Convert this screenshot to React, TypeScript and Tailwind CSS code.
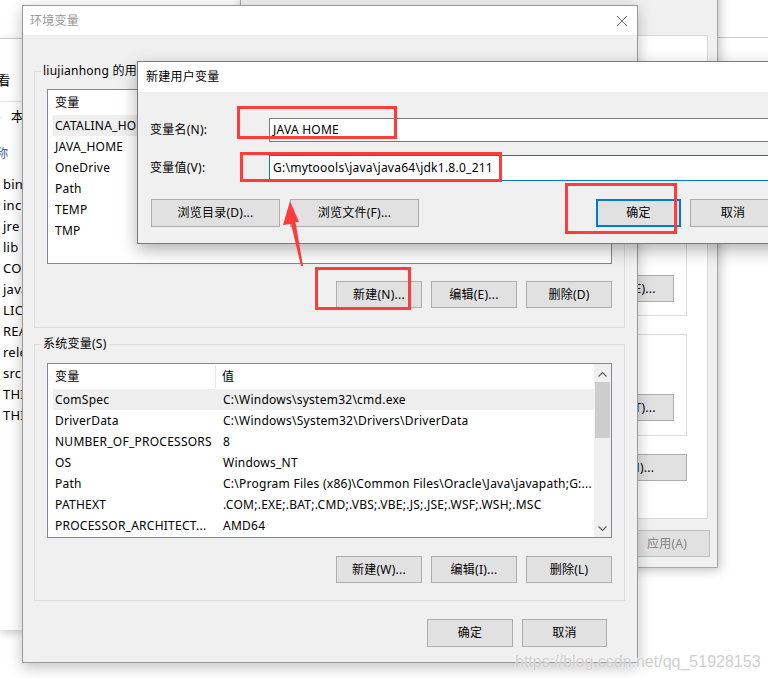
import type { ReactNode } from 'react';

const userVars = ['CATALINA_HOME', 'JAVA_HOME', 'OneDrive', 'Path', 'TEMP', 'TMP'];

const sysVars: [string, string][] = [
  ['ComSpec', 'C:\\Windows\\system32\\cmd.exe'],
  ['DriverData', 'C:\\Windows\\System32\\Drivers\\DriverData'],
  ['NUMBER_OF_PROCESSORS', '8'],
  ['OS', 'Windows_NT'],
  ['Path', 'C:\\Program Files (x86)\\Common Files\\Oracle\\Java\\javapath;G:...'],
  ['PATHEXT', '.COM;.EXE;.BAT;.CMD;.VBS;.VBE;.JS;.JSE;.WSF;.WSH;.MSC'],
  ['PROCESSOR_ARCHITECT...', 'AMD64'],
];

const files = [
  'bin',
  'include',
  'jre',
  'lib',
  'COPYRIGHT',
  'javafx-src.zip',
  'LICENSE',
  'README.html',
  'release',
  'src.zip',
  'THIRDPARTYLICENSEREADME.txt',
  'THIRDPARTYLICENSEREADME-JAVAFX.txt',
];

function Button({ children, className = '' }: { children: ReactNode; className?: string }) {
  return (
    <div className={`flex shrink-0 items-center justify-center whitespace-nowrap bg-[#e1e1e1] text-[12px] ${className}`}>
      {children}
    </div>
  );
}

function GroupBox({ label, className = '', children }: { label: string; className?: string; children: ReactNode }) {
  return (
    <div className={`relative border border-[#dcdcdc] ${className}`}>
      <span className="absolute -top-[9px] left-[6px] whitespace-nowrap bg-[#f0f0f0] px-[2px] leading-[16px]">{label}</span>
      {children}
    </div>
  );
}

function Chevron({ down = false }: { down?: boolean }) {
  return (
    <svg width="9" height="5" viewBox="0 0 9 5">
      <polyline
        points={down ? '0.5,0.5 4.5,4.5 8.5,0.5' : '0.5,4.5 4.5,0.5 8.5,4.5'}
        fill="none"
        stroke="#606060"
        strokeWidth="1.2"
      />
    </svg>
  );
}

function RedBox({ className }: { className: string }) {
  return <div className={`absolute z-50 border-[3px] border-[#ff3b3b] ${className}`} />;
}

export default function App() {
  return (
    <div className="relative h-[678px] w-[768px] overflow-hidden bg-white text-[12px] tracking-[0.25px] text-black [font-family:'Noto_Sans','Noto_Sans_CJK_SC',sans-serif]">
      {/* far right window */}
      <div className="absolute left-[718px] top-0 z-0 h-[678px] w-[60px] bg-white">
        <div className="h-[38px] border-b border-[#cfcfcf]" />
      </div>

      {/* system properties window (behind) */}
      <div className="absolute left-[240px] top-[-30px] z-10 flex h-[598px] w-[478px] flex-col items-end border border-[#a8a8a8] bg-[#f0f0f0] pr-[9px] shadow-[2px_2px_10px_rgba(0,0,0,0.25)]">
        <div className="mt-[64px] flex h-[484px] w-[420px] flex-col items-end border border-[#d9d9d9] bg-white pr-[20px]">
          <div className="mt-[114px] flex h-[166px] w-[380px] flex-col items-end justify-end border border-[#dcdcdc] pb-[13px] pr-[12px]">
            <Button className="h-[27px] w-[86px] border border-[#adadad]">设置(E)...</Button>
          </div>
          <div className="mt-[18px] flex h-[102px] w-[380px] flex-col items-end justify-end border border-[#dcdcdc] pb-[14px] pr-[12px]">
            <Button className="h-[27px] w-[86px] border border-[#adadad]">设置(T)...</Button>
          </div>
          <Button className="mt-[18px] h-[27px] w-[142px] border border-[#adadad]">环境变量(N)...</Button>
        </div>
        <Button className="-mr-[2px] mt-[11px] h-[27px] w-[86px] border border-[#bfbfbf] bg-[#cccccc] text-[#838383]">
          应用(A)
        </Button>
      </div>

      {/* explorer window at left */}
      <div className="absolute left-0 top-[38px] z-20 h-[592px] w-[24px] overflow-hidden border-t border-[#c9c9c9] bg-white shadow-[0_3px_8px_rgba(0,0,0,0.2)]">
        <div className="mt-[31px] h-[21px] whitespace-nowrap leading-[21px] -ml-[16px] text-[13px]">查看</div>
        <div className="mt-[10px] border-t border-[#e3e3e3]" />
        <div className="mt-[4px] flex h-[21px] items-center whitespace-nowrap">
          <span className="-ml-[3px] text-[#777]">›</span>
          <span className="ml-[10px] text-[13px]">本</span>
        </div>
        <div className="mt-[16px] h-[21px] whitespace-nowrap leading-[21px] -ml-[16px] text-[#3b5998]">名称</div>
        <div className="mt-[10px]">
          {files.map((f) => (
            <div key={f} className="h-[21px] whitespace-nowrap pl-[3px] leading-[21px] text-[13px]">
              {f}
            </div>
          ))}
        </div>
      </div>

      {/* 环境变量 window */}
      <div className="absolute left-[22px] top-[5px] z-30 flex h-[658px] w-[616px] flex-col border border-[#9a9a9a] bg-[#f0f0f0] shadow-[0_4px_14px_rgba(0,0,0,0.25)]">
        <div className="flex h-[29px] shrink-0 items-center justify-between bg-white pl-[7px] pr-[10px] text-[#999]">
          <span>环境变量</span>
          <svg width="10" height="10" viewBox="0 0 10 10">
            <path d="M0 0L10 10M10 0L0 10" stroke="#7a7a7a" strokeWidth="1" />
          </svg>
        </div>
        <div className="flex flex-1 flex-col pl-[11px] pr-[12px] pt-[36px]">
          <GroupBox label="liujianhong 的用户变量(U)" className="h-[257px]">
            <div className="px-[12px] pt-[17px]">
              <div className="h-[175px] border border-[#828790] bg-white">
                <div className="h-[25px] pl-[7px] leading-[25px]">变量</div>
                {userVars.map((v, i) => (
                  <div
                    key={v}
                    className={`ml-[5px] h-[21px] whitespace-nowrap pl-[2px] leading-[21px] ${i === 0 ? 'bg-[#efefef]' : ''}`}
                  >
                    {v}
                  </div>
                ))}
              </div>
              <div className="mt-[17px] flex justify-end gap-[9px]">
                <Button className="h-[27px] w-[86px] border border-[#adadad]">新建(N)...</Button>
                <Button className="h-[27px] w-[86px] border border-[#adadad]">编辑(E)...</Button>
                <Button className="h-[27px] w-[86px] border border-[#adadad]">删除(D)</Button>
              </div>
            </div>
          </GroupBox>

          <GroupBox label="系统变量(S)" className="mt-[16px] h-[257px]">
            <div className="px-[12px] pt-[18px]">
              <div className="flex h-[175px] border border-[#828790] bg-white">
                <div className="min-w-0 flex-1 overflow-hidden">
                  <div className="flex h-[25px] items-center">
                    <div className="h-[23px] w-[168px] shrink-0 border-r border-[#e5e5e5] pl-[7px] leading-[23px]">变量</div>
                    <div className="pl-[6px]">值</div>
                  </div>
                  {sysVars.map(([name, value], i) => (
                    <div
                      key={name}
                      className={`ml-[5px] flex h-[21px] leading-[21px] ${i === 0 ? 'bg-[#efefef]' : ''}`}
                    >
                      <div className="w-[163px] shrink-0 overflow-hidden whitespace-nowrap pl-[2px]">{name}</div>
                      <div className="overflow-hidden whitespace-nowrap pl-[7px]">{value}</div>
                    </div>
                  ))}
                </div>
                <div className="flex w-[17px] shrink-0 flex-col bg-[#f0f0f0]">
                  <div className="flex h-[17px] items-center justify-center pt-[3px]">
                    <Chevron />
                  </div>
                  <div className="mx-[1px] mt-[1px] h-[56px] bg-[#cdcdcd]" />
                  <div className="flex-1" />
                  <div className="flex h-[17px] items-center justify-center">
                    <Chevron down />
                  </div>
                </div>
              </div>
              <div className="mt-[18px] flex justify-end gap-[9px]">
                <Button className="h-[27px] w-[86px] border border-[#adadad]">新建(W)...</Button>
                <Button className="h-[27px] w-[86px] border border-[#adadad]">编辑(I)...</Button>
                <Button className="h-[27px] w-[86px] border border-[#adadad]">删除(L)</Button>
              </div>
            </div>
          </GroupBox>

          <div className="mr-[18px] mt-[18px] flex justify-end gap-[9px]">
            <Button className="h-[28px] w-[86px] border border-[#adadad]">确定</Button>
            <Button className="h-[28px] w-[85px] border border-[#adadad]">取消</Button>
          </div>
        </div>
      </div>

      {/* 新建用户变量 dialog */}
      <div className="absolute left-[137px] top-[61px] z-40 w-[660px] border border-[#7b7b7b] bg-[#f0f0f0] shadow-[0_6px_16px_rgba(0,0,0,0.3)]">
        <div className="h-[30px] bg-white pl-[8px] leading-[30px]">新建用户变量</div>
        <div className="pb-[16px] pt-[26px]">
          <div className="flex h-[24px] items-center">
            <div className="w-[131px] shrink-0 pl-[12px]">变量名(N):</div>
            <div className="h-[24px] w-[516px] border border-[#7a7a7a] bg-white pl-[3px] leading-[22px]">JAVA HOME</div>
          </div>
          <div className="mt-[13px] flex h-[26px] items-center">
            <div className="w-[131px] shrink-0 pl-[12px]">变量值(V):</div>
            <div className="h-[26px] w-[516px] border border-[#0078d7] bg-white pl-[3px] leading-[24px]">
              G:\mytoools\java\java64\jdk1.8.0_211
            </div>
          </div>
          <div className="mt-[18px] flex">
            <Button className="ml-[13px] h-[28px] w-[129px] border border-[#adadad]">浏览目录(D)...</Button>
            <Button className="ml-[10px] h-[28px] w-[129px] border border-[#adadad]">浏览文件(F)...</Button>
            <Button className="ml-[177px] h-[28px] w-[85px] border-2 border-[#0078d7]">确定</Button>
            <Button className="ml-[9px] h-[28px] w-[86px] border border-[#adadad]">取消</Button>
          </div>
        </div>
      </div>

      {/* annotations */}
      <RedBox className="left-[237px] top-[106px] h-[33px] w-[160px]" />
      <RedBox className="left-[240px] top-[152px] h-[30px] w-[262px]" />
      <RedBox className="left-[565px] top-[183px] h-[51px] w-[112px]" />
      <RedBox className="left-[315px] top-[267px] h-[43px] w-[96px]" />
      <svg className="absolute left-[278px] top-[196px] z-50" width="30" height="75" viewBox="0 0 30 75">
        <polygon points="12,5 21,26 17.5,26 25,70 23,70 13,28 5,29" fill="#ff3b3b" />
      </svg>

      {/* watermark */}
      <div className="absolute left-[515px] top-[650px] z-50 whitespace-nowrap text-[16px] tracking-normal text-[#cfcfcf] [font-family:'Liberation_Sans',sans-serif] [text-shadow:0_0_2px_#ffffff]">
        https://blog.csdn.net/qq_51928153
      </div>
    </div>
  );
}
